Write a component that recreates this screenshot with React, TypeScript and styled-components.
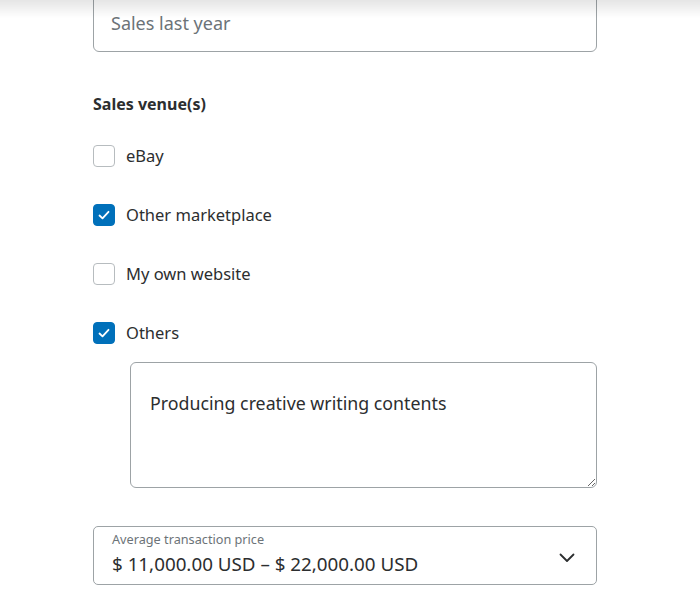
import React, { useState } from 'react'
import styled, { createGlobalStyle } from 'styled-components'

const GlobalStyle = createGlobalStyle`
  html, body {
    margin: 0;
    padding: 0;
    background: #fff;
    overflow: hidden;
  }
  body {
    font-family: "Noto Sans", "Open Sans", Arial, sans-serif;
    color: #2c2e2f;
  }
  * { box-sizing: border-box; }
`

const TopShade = styled.div`
  position: fixed;
  top: 0;
  left: 0;
  right: 0;
  height: 18px;
  background: linear-gradient(rgba(0, 0, 0, 0.1), rgba(0, 0, 0, 0));
  pointer-events: none;
  z-index: 2;
`

const Form = styled.div`
  width: 504px;
  margin-left: 93px;
  margin-top: -12px;
  display: flex;
  flex-direction: column;
`

const TextInput = styled.input`
  height: 64px;
  width: 100%;
  border: 1px solid #9da3a6;
  border-radius: 6px;
  padding: 6px 17px 0;
  font-family: inherit;
  font-size: 18px;
  color: #2c2e2f;
  outline: none;
  &::placeholder { color: #6c7378; }
`

const Heading = styled.h3`
  margin: 40px 0 0;
  font-size: 16px;
  line-height: 24px;
  font-weight: 700;
`

const Options = styled.div`
  margin-top: 29px;
  display: flex;
  flex-direction: column;
  gap: 37px;
`

const Row = styled.label`
  display: flex;
  align-items: center;
  gap: 11px;
  height: 22px;
  font-size: 16.5px;
  line-height: 20px;
  cursor: pointer;
`

const Box = styled.span<{ $checked: boolean }>`
  width: 22px;
  height: 22px;
  flex: none;
  border-radius: 4px;
  border: 1px solid ${p => (p.$checked ? '#0070ba' : '#b7bcbf')};
  background: ${p => (p.$checked ? '#0070ba' : '#fff')};
  display: flex;
  align-items: center;
  justify-content: center;
`

const Note = styled.textarea`
  margin: 18px 0 0 37px;
  width: 467px;
  height: 126px;
  border: 1px solid #9da3a6;
  border-radius: 6px;
  padding: 28px 19px 0;
  font-family: inherit;
  font-size: 17.8px;
  line-height: 24px;
  color: #2c2e2f;
  outline: none;
`

const Select = styled.div`
  margin-top: 38px;
  height: 59px;
  border: 1px solid #9da3a6;
  border-radius: 5px;
  padding: 4px 21px 0 18px;
  display: flex;
  align-items: center;
`

const SelectText = styled.div`
  flex: 1;
  display: flex;
  flex-direction: column;
  align-self: flex-start;
`

const SelectLabel = styled.span`
  font-size: 12.7px;
  line-height: 16px;
  color: #6c7378;
`

const SelectValue = styled.span`
  margin-top: 4px;
  font-size: 18.8px;
  line-height: 26px;
  color: #2c2e2f;
`

const Check = () => (
  <svg width="14" height="14" viewBox="0 0 14 14" fill="none">
    <path d="M2.5 7.5 L5.5 10.3 L11.5 3.8" stroke="#fff" strokeWidth="1.8" strokeLinecap="round" strokeLinejoin="round" />
  </svg>
)

const Chevron = () => (
  <svg width="16" height="10" viewBox="0 0 16 10" fill="none">
    <path d="M1.5 1.5 L8 8 L14.5 1.5" stroke="#2c2e2f" strokeWidth="1.8" strokeLinecap="round" strokeLinejoin="round" />
  </svg>
)

const venues = ['eBay', 'Other marketplace', 'My own website', 'Others']

export default function App() {
  const [checked, setChecked] = useState<string[]>(['Other marketplace', 'Others'])
  const toggle = (v: string) =>
    setChecked(c => (c.includes(v) ? c.filter(x => x !== v) : [...c, v]))
  return (
    <>
      <GlobalStyle />
      <TopShade />
      <Form>
        <TextInput placeholder="Sales last year" />
        <Heading>Sales venue(s)</Heading>
        <Options>
          {venues.map(v => (
            <Row key={v} onClick={() => toggle(v)}>
              <Box $checked={checked.includes(v)}>{checked.includes(v) && <Check />}</Box>
              {v}
            </Row>
          ))}
        </Options>
        <Note defaultValue="Producing creative writing contents" />
        <Select>
          <SelectText>
            <SelectLabel>Average transaction price</SelectLabel>
            <SelectValue>$ 11,000.00 USD – $ 22,000.00 USD</SelectValue>
          </SelectText>
          <Chevron />
        </Select>
      </Form>
    </>
  )
}
